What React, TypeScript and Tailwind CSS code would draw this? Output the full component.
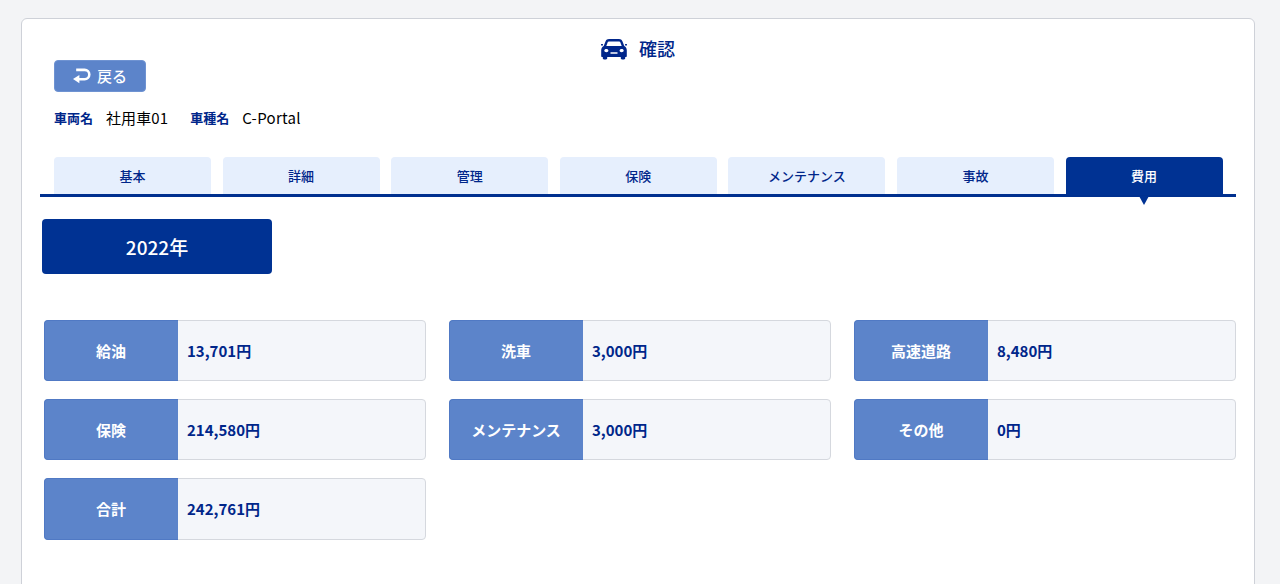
const TABS = ["基本", "詳細", "管理", "保険", "メンテナンス", "事故", "費用"];
const ACTIVE_TAB = "費用";

const COSTS = [
  { label: "給油", value: "13,701円" },
  { label: "洗車", value: "3,000円" },
  { label: "高速道路", value: "8,480円" },
  { label: "保険", value: "214,580円" },
  { label: "メンテナンス", value: "3,000円" },
  { label: "その他", value: "0円" },
  { label: "合計", value: "242,761円" },
];

function CarIcon() {
  return (
    <svg width="26" height="22" viewBox="0 0 26 22" className="shrink-0">
      <path
        fill="currentColor"
        fillRule="evenodd"
        d="M8 1h10c1.600 0 2.800.9 3.400 2.300L23.300 8c1.600 1 2.500 2.400 2.500 4.200V18c0 .6-.4 1-1 1h-.6v1.300c0 .7-.5 1.200-1.200 1.200h-2c-.7 0-1.200-.5-1.200-1.200V19H6.200v1.300c0 .7-.5 1.200-1.200 1.200H3c-.7 0-1.200-.5-1.200-1.200V19h-.6c-.6 0-1-.4-1-1v-5.800C.2 10.400 1.100 9 2.700 8l1.900-4.700C5.200 1.900 6.400 1 8 1ZM7.900 3.400c-.6 0-1 .3-1.200.9L5.300 8h15.400l-1.400-3.700c-.2-.6-.6-.9-1.200-.9ZM5.300 10.900c-1.200 0-2 .7-2 1.700s.9 1.700 2.100 1.700 2-.7 2-1.700-.9-1.700-2.100-1.700Zm15.400 0c-1.200 0-2.100.7-2.100 1.700s.8 1.700 2 1.700 2.100-.7 2.100-1.700-.8-1.700-2-1.700ZM9.500 14.300v1.500h7v-1.500Z"
      />
      <rect x="0" y="6" width="2" height="1.500" rx=".5" fill="currentColor" />
      <rect x="24" y="6" width="2" height="1.500" rx=".5" fill="currentColor" />
    </svg>
  );
}

function CostRow({ label, value }: { label: string; value: string }) {
  return (
    <div className="flex h-[61.2px] rounded border border-[#d5d8de] bg-[#f4f6fa]">
      <div className="-my-px -ml-px flex w-[134px] shrink-0 items-center justify-center rounded-l border border-r-0 border-[#5079c4] bg-[#5c84ca] pt-px pr-px text-[15px] font-bold text-white">
        {label}
      </div>
      <div className="flex flex-1 items-center pt-px pl-[9px] text-[15px] font-bold text-[#00268a]">
        {value}
      </div>
    </div>
  );
}

function App() {
  return (
    <div
      className="h-[584px] overflow-hidden bg-[#f3f4f6] pt-[18px] pr-[25px] pl-[21px]"
      style={{ fontFamily: '"Noto Sans CJK JP", "Noto Sans", sans-serif' }}
    >
      <div className="h-[640px] rounded-md border border-[#ced1d8] bg-white px-[18px]">
        {/* Title */}
        <div className="flex h-[41px] items-end justify-center gap-[12px] text-[#00268a]">
          <CarIcon />
          <h1 className="text-[18px] leading-[24px] font-medium">確認</h1>
        </div>

        {/* Back button */}
        <div className="pl-[14px]">
          <button className="flex h-[32px] w-[92px] items-center justify-center gap-[6px] rounded border border-[#6f93d2] bg-[#5c84ca] text-[15px] font-medium text-white">
            <svg width="18" height="16" viewBox="0 0 17 15" fill="none" stroke="currentColor" strokeWidth="2.400">
              <path d="M3 1.700h8a4.400 4.400 0 0 1 0 8.800H4" />
              <path d="M6 6.500 0 10.400l6 3.900z" fill="currentColor" stroke="none" />
            </svg>
            戻る
          </button>
          <div className="mt-[15px] flex h-[22px] items-center">
            <span className="text-[13px] font-bold text-[#00268a]">車両名</span>
            <span className="ml-[13px] text-[15px] font-normal tracking-[0.1px] text-black">社用車01</span>
            <span className="ml-[22px] text-[13px] font-bold text-[#00268a]">車種名</span>
            <span className="ml-[13px] text-[15px] font-normal tracking-[0.3px] text-black">C-Portal</span>
          </div>
        </div>

        {/* Tabs */}
        <div className="mt-[28px] flex gap-[11.6px] border-b-[3px] border-[#00308f] pl-[14px]">
          {TABS.map((tab) =>
            tab === ACTIVE_TAB ? (
              <div
                key={tab}
                className="relative -mb-[1px] flex h-[38px] w-[157px] items-center justify-center rounded-t bg-[#003293] text-[13px] font-medium text-white"
              >
                {tab}
                <span className="absolute top-[39px] left-1/2 h-0 w-0 -translate-x-1/2 border-x-[5px] border-t-[9px] border-x-transparent border-t-[#003293]" />
              </div>
            ) : (
              <div
                key={tab}
                className="flex h-[37px] w-[157px] items-center justify-center rounded-t bg-[#e6effd] text-[13px] font-medium text-[#00268a]"
              >
                {tab}
              </div>
            ),
          )}
        </div>

        {/* Year */}
        <button className="mt-[22px] ml-[2px] flex h-[55px] w-[230px] items-center justify-center rounded bg-[#003293] pt-[2px] text-[19px] font-medium text-white">
          2022年
        </button>

        {/* Costs */}
        <div className="mt-[46px] ml-[4px] grid grid-cols-3 gap-x-[23px] gap-y-[18px]">
          {COSTS.map((cost) => (
            <CostRow key={cost.label} label={cost.label} value={cost.value} />
          ))}
        </div>
      </div>
    </div>
  );
}

export default App;
